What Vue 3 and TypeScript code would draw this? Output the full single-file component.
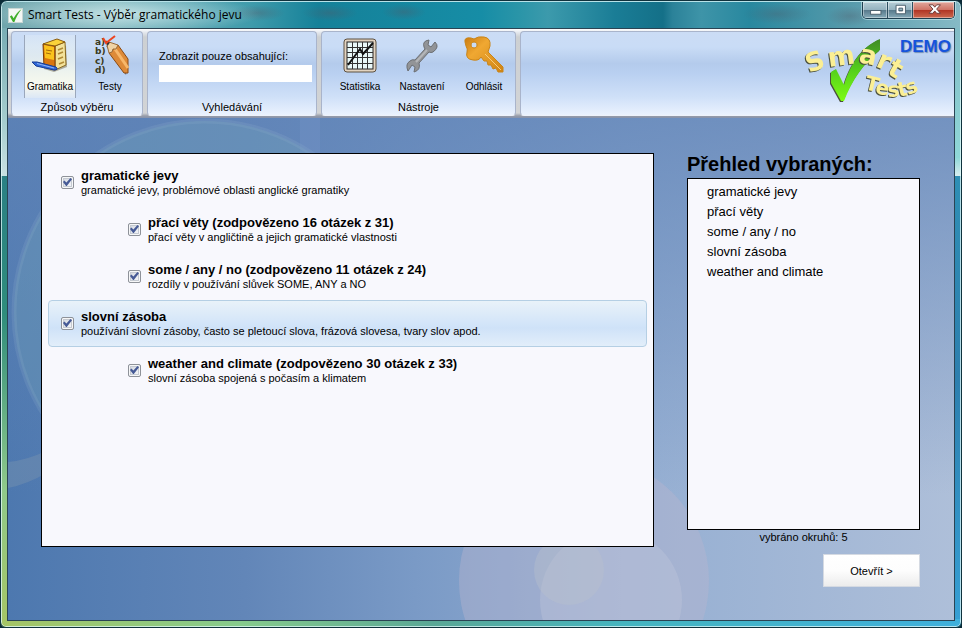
<script setup lang="ts">
import { computed, ref } from 'vue'

interface Topic {
  id: string
  title: string
  progress?: string
  note: string
  child: boolean
  checked: boolean
}

const topics = ref<Topic[]>([
  { id: 'jevy', title: 'gramatické jevy', note: 'gramatické jevy, problémové oblasti anglické gramatiky', child: false, checked: true },
  { id: 'prani', title: 'přací věty', progress: '(zodpovězeno 16 otázek z 31)', note: 'přací věty v angličtině a jejich gramatické vlastnosti', child: true, checked: true },
  { id: 'some', title: 'some / any / no', progress: '(zodpovězeno 11 otázek z 24)', note: 'rozdíly v používání slůvek SOME, ANY a NO', child: true, checked: true },
  { id: 'zasoba', title: 'slovní zásoba', note: 'používání slovní zásoby, často se pletoucí slova, frázová slovesa, tvary slov apod.', child: false, checked: true },
  { id: 'weather', title: 'weather and climate', progress: '(zodpovězeno 30 otázek z 33)', note: 'slovní zásoba spojená s počasím a klimatem', child: true, checked: true },
])

const activeId = ref('zasoba')
const filter = ref('')
const mode = ref<'gramatika' | 'testy'>('gramatika')
const selected = computed(() => topics.value.filter((t) => t.checked))
</script>

<template>
  <div class="window">
    <header class="titlebar">
      <svg class="app-icon" viewBox="0 0 16 16" aria-hidden="true">
        <rect x="0.5" y="0.5" width="15" height="15" fill="#f4f7f4" stroke="#c9d6d4" />
        <path d="M2 9 L4 7.6 L6 11 C8 7 10.5 3.5 14.5 1 C11 5.5 8.5 10 6.8 15 L5.3 15 Z" fill="#3fae2a" />
      </svg>
      <h1>Smart Tests - Výběr gramatického jevu</h1>
      <div class="caption-buttons">
        <button type="button" aria-label="Minimalizovat">
          <svg viewBox="0 0 24 17"><rect x="7" y="9" width="11" height="4" fill="#fff" stroke="#4b5f6c" /></svg>
        </button>
        <button type="button" aria-label="Maximalizovat">
          <svg viewBox="0 0 24 17"><path d="M7.500 3.500h10v9h-10z M10.500 6.500v3h4v-3z" fill="#fff" fill-rule="evenodd" stroke="#4b5f6c" /></svg>
        </button>
        <button type="button" class="close" aria-label="Zavřít">
          <svg viewBox="0 0 40 17"><path d="M15 3h4l2 2.500L23 3h4l-4 4.500 4 4.500h-4l-2-2.500-2 2.500h-4l4-4.500z" fill="#fff" stroke="#6b3a38" /></svg>
        </button>
      </div>
    </header>

    <div class="client">
      <nav class="ribbon">
        <section class="group group-mode">
          <div class="tools">
            <button type="button" class="tool" :class="{ on: mode === 'gramatika' }" @click="mode = 'gramatika'">
              <svg viewBox="0 0 36 36" aria-hidden="true">
                <path d="M12 8 L28 4 L34 8 L35 29 L22 34 L12 31 Z" fill="#3a2a0a" opacity=".35" />
                <path d="M23 8 L33 4 L34 27 L23 32 Z" fill="#f3e29a" stroke="#8a6a20" />
                <path d="M26 12l5-2M26 16l5-2M26 21l5-2M27 26l5-2" stroke="#b08a35" stroke-width="1.500" />
                <path d="M11 6 L23 8 L23 32 L12 29 Z" fill="#d9760f" stroke="#7a3d05" />
                <path d="M12 7 L22 9 L22 22 L13 20 Z" fill="#fbc31c" />
                <path d="M14 12l6 1M14 15l5 1" stroke="#a5680a" />
                <path d="M11 6 L25 1 L33 4 L23 8 Z" fill="#fbd23a" stroke="#8a5a10" />
                <path d="M0 24 L5 24 L24 29 Q27 32 22 32 L4 28 Z" fill="#2f68d8" stroke="#173c94" />
                <path d="M5 25.500 L22 30" stroke="#8fb4f6" />
              </svg>
              <span>Gramatika</span>
            </button>
            <button type="button" class="tool" :class="{ on: mode === 'testy' }" @click="mode = 'testy'">
              <svg viewBox="0 0 36 40" class="tall" aria-hidden="true">
                <g class="abc">
                  <text x="3" y="10">a)</text>
                  <text x="3" y="19">b)</text>
                  <text x="3" y="29">c)</text>
                  <text x="3" y="38">d)</text>
                </g>
                <path d="M14 11 L34 40 L35 35 L26 14 Z" fill="#222" opacity=".55" />
                <path d="M17 18 L26 10 L36 24 L36 38 L32 38 Z" fill="#dd8a38" stroke="#8a4a14" />
                <path d="M23 14 L36 33" stroke="#f7b76a" stroke-width="3" />
                <path d="M14 6 L26 10 L24 14 L21 14 L20 17 L17 18 Z" fill="#f0d3a6" stroke="#9b6c3a" />
                <path d="M14 6 L18 7.500 L15.500 11 Z" fill="#333" />
                <path d="M11 3 L14 8 L23 1" fill="none" stroke="#ee4420" stroke-width="2" />
              </svg>
              <span>Testy</span>
            </button>
          </div>
          <h2>Způsob výběru</h2>
        </section>

        <section class="group group-search">
          <div class="search">
            <label for="filter">Zobrazit pouze obsahující:</label>
            <input id="filter" v-model="filter" type="text" />
          </div>
          <h2>Vyhledávání</h2>
        </section>

        <section class="group group-tools">
          <div class="tools">
            <button type="button" class="tool">
              <svg viewBox="0 0 36 36" aria-hidden="true">
                <rect x="2" y="1" width="32" height="33" rx="3" fill="#e2d3c0" stroke="#5d5040" />
                <rect x="5" y="4" width="26" height="27" fill="#e9f8f8" stroke="#222" />
                <path d="M10.500 4v27M15.500 4v27M20.500 4v27M25.500 4v27M5 9.500h26M5 14.500h26M5 19.500h26M5 25.500h26" stroke="#333" />
                <path d="M6 27 L18 11 L21 16 L31 5" fill="none" stroke="#111" stroke-width="2" />
              </svg>
              <span>Statistika</span>
            </button>
            <button type="button" class="tool">
              <svg viewBox="0 0 36 36" aria-hidden="true">
                <path d="M20 9 Q18 3 25 2 L24 7 L27 9 L31 4 Q36 9 29 14 Q27 15 25 14 L15 25 Q17 32 10 34 L11 29 L8 27 L4 33 Q1 26 6 23 Q8 21 11 22 L21 11 Z" fill="#929497" stroke="#6c6f73" stroke-linejoin="round" />
                <path d="M23 12 L12 24" stroke="#b4b6b9" stroke-width="2" />
              </svg>
              <span>Nastavení</span>
            </button>
            <button type="button" class="tool">
              <svg viewBox="0 0 40 38" class="key" aria-hidden="true">
                <defs>
                  <linearGradient id="gold" x1="0" y1="0" x2="1" y2="1">
                    <stop offset="0" stop-color="#c97a10" />
                    <stop offset=".35" stop-color="#f0a832" />
                    <stop offset="1" stop-color="#cf8312" />
                  </linearGradient>
                </defs>
                <path fill-rule="evenodd" d="M1 6 Q0 1 7 2 L10 3 Q14 0 20 1 Q27 2 26 10 L24 16 L39 31 L39 36 L34 36 L32 32 L29 33 L27 29 L24 29 L23 25 L20 25 L17 21 Q15 25 9 24 Q1 23 3 16 Q4 13 2 10 Z M10 6a3 3 0 1 0 .1 0z" fill="url(#gold)" stroke="#c98418" />
                <path d="M21 18 L37 34" stroke="#f8cc78" />
              </svg>
              <span>Odhlásit</span>
            </button>
          </div>
          <h2>Nástroje</h2>
        </section>

        <section class="group group-brand">
          <svg class="logo" viewBox="0 0 124 70">
            <defs>
              <linearGradient id="tick" x1="0" y1="1" x2="0" y2="0">
                <stop offset="0" stop-color="#7dfc14" />
                <stop offset=".5" stop-color="#55cf1c" />
                <stop offset="1" stop-color="#3f8a25" />
              </linearGradient>
            </defs>
            <path class="lifted" d="M27 40 L32 37 L40 53 C46 33 57 15 76 7 L76 18 C60 31 48 48 40 69 L37 69 L27 51 Z" fill="url(#tick)" />
            <text class="big lifted" x="5 25 54 71 82" y="41 35 30 34 41" rotate="-20 -8 12 24 30">Smart</text>
            <text class="small lifted" x="60 71 84 95 104" y="57 62 65 65 63" rotate="14 6 -4 -12 -20">Tests</text>
          </svg>
          <strong class="demo">DEMO</strong>
        </section>
      </nav>

      <main class="stage">
        <svg class="bubbles" viewBox="0 0 946 502" preserveAspectRatio="xMidYMax slice" aria-hidden="true">
          <circle cx="197" cy="194" r="191" fill="#74a4b8" fill-opacity=".32" stroke="#8fb0cc" stroke-opacity=".2" stroke-width="5" />
          <path d="M0 344 Q20 342 40 332 L40 354 Q20 366 0 370 Z" fill="#7d95b0" opacity=".4" />
          <rect x="292" y="0" width="20" height="60" fill="#8fa8e0" opacity=".15" />
          <circle cx="576" cy="463" r="125" fill="#b8b6d0" fill-opacity=".42" />
          <circle cx="603" cy="482" r="71" fill="#c2c8dc" fill-opacity=".35" />
          <circle cx="561" cy="452" r="35" fill="#b9c0cc" fill-opacity=".4" />
        </svg>

        <section class="topics" aria-label="Okruhy">
          <ul>
            <li v-for="t in topics" :key="t.id" :class="{ child: t.child, active: t.id === activeId }" @click="activeId = t.id">
              <input :id="t.id" v-model="t.checked" type="checkbox" />
              <label :for="t.id">
                <b>{{ t.title }}{{ t.progress ? ' ' + t.progress : '' }}</b>
                <span>{{ t.note }}</span>
              </label>
            </li>
          </ul>
        </section>

        <aside class="summary">
          <h2>Přehled vybraných:</h2>
          <ul>
            <li v-for="t in selected" :key="t.id">{{ t.title }}</li>
          </ul>
          <p>vybráno okruhů: {{ selected.length }}</p>
          <button type="button" class="open">Otevřít &gt;</button>
        </aside>
      </main>
    </div>
  </div>
</template>

<style>
body {
  background: #0b2a36;
}
</style>

<style scoped>
* {
  box-sizing: border-box;
}
h1, h2, p, ul {
  margin: 0;
  padding: 0;
  font-weight: normal;
}
ul {
  list-style: none;
}
button {
  font: inherit;
  color: inherit;
  margin: 0;
  padding: 0;
}
.window {
  min-height: 100vh;
  display: flex;
  flex-direction: column;
  padding: 0 6px 6px;
  border: 1px solid #10323d;
  border-radius: 7px 7px 6px 6px;
  box-shadow: inset 0 0 0 1px rgba(225, 250, 250, 0.75);
  font-family: "Liberation Sans", Arial, sans-serif;
  color: #000;
  background:
    linear-gradient(90deg, #a5c565, #86cb8c 25%, #5aa896 45%, #45b5c0 65%, #3fb0dc) bottom / 100% 8px no-repeat,
    linear-gradient(180deg, #7fb5c2, #8fd8d8 25%, #d9eef0 28%, #2f8fb5 28%, #2d7fae 60%, #36a0d5) right / 8px 100% no-repeat,
    linear-gradient(180deg, #6ba3ac, #a8cfd0 20%, #c8e0e2 28%, #2a8084 28%, #2f8d7c 50%, #8fc98a 78%, #a5c565) left / 8px 100% no-repeat,
    #3b9db3;
}
.titlebar {
  height: 26px;
  display: flex;
  align-items: center;
  gap: 5px;
  margin: 1px -5px 0;
  padding: 0 5px 0 6px;
  border-radius: 5px 5px 0 0;
  background:
    radial-gradient(ellipse 140px 20px at 120px 12px, rgba(235, 250, 250, 0.65), rgba(235, 250, 250, 0) 100%),
    radial-gradient(ellipse 28px 8px at 255px 11px, rgba(80, 90, 105, 0.4), transparent),
    radial-gradient(ellipse 28px 8px at 328px 11px, rgba(80, 90, 105, 0.4), transparent),
    radial-gradient(ellipse 22px 8px at 402px 10px, rgba(80, 90, 105, 0.4), transparent),
    radial-gradient(ellipse 34px 10px at 775px 12px, rgba(80, 90, 105, 0.35), transparent),
    radial-gradient(ellipse 24px 10px at 848px 14px, rgba(80, 90, 105, 0.35), transparent),
    linear-gradient(90deg, #6fa5ac, #7ab4bc 12%, #3f9bab 26%, #158199 33%, #168da6 50%, #2a95a8 54%, #3c9aac 57%, #1a7d96 64%, #147088 69%, #2b8299 70%, #3e94a8 73%, #28889f 78%, #5599aa 88%, #86bac6);
}
.app-icon {
  width: 15px;
  height: 15px;
}
h1 {
  flex: 1;
  font: 12px/16px "Open Sans", "Noto Sans", sans-serif;
  white-space: nowrap;
}
.caption-buttons {
  align-self: flex-start;
  display: flex;
  height: 17px;
  border: 1px solid #1e3f50;
  border-top: 0;
  border-radius: 0 0 5px 5px;
  overflow: hidden;
  box-shadow: 0 0 0 1px rgba(220, 245, 250, 0.5);
}
.caption-buttons button {
  width: 25px;
  border: 0;
  border-right: 1px solid #2c4f60;
  background: linear-gradient(#b5cdd6, #94b2bf 48%, #56788a 50%, #86aab8);
  box-shadow: inset 0 0 0 1px rgba(255, 255, 255, 0.4);
}
.caption-buttons .close {
  width: 41px;
  border-right: 0;
  background: linear-gradient(#e0a79c, #cf7466 48%, #b03323 50%, #cc6a50);
}
.caption-buttons svg {
  display: block;
  height: 16px;
  margin: 0 auto;
}
.client {
  flex: 1;
  display: flex;
  flex-direction: column;
  border: 1px solid #2a4454;
}
.ribbon {
  display: flex;
  gap: 4px;
  padding: 2px 0 0 3px;
  height: 89px;
  background: linear-gradient(#fff, #e6eaf0 3px, #cdd0d2 8px, #d2d4d6 84px, #979ca8 87px, #8692ac);
}
.group {
  display: flex;
  flex-direction: column;
  height: 85px;
  border: 1px solid #a9b4cb;
  border-bottom-color: #eef2fa;
  border-radius: 4px;
  background: linear-gradient(#cbdcf5, #c9dcf6 18%, #b4cbec 38%, #b9d0f1 50%, #cfe0f8 78%, #eaf2fe);
}
.group h2 {
  margin-top: auto;
  padding-bottom: 1px;
  font-size: 11px;
  line-height: 14px;
  text-align: center;
}
.group-mode {
  width: 132px;
}
.group-search {
  width: 170px;
}
.group-tools {
  width: 195px;
}
.group-brand {
  flex: 1;
  flex-direction: row;
  justify-content: flex-end;
  border-right: 0;
  border-radius: 4px 0 0 4px;
}
.tools {
  display: flex;
  gap: 8px;
  padding: 3px 0 0 12px;
}
.group-tools .tools {
  gap: 10px;
}
.tool {
  width: 52px;
  height: 63px;
  display: flex;
  flex-direction: column;
  align-items: center;
  justify-content: space-between;
  padding: 0 0 5px;
  border: 1px solid transparent;
  border-width: 0 1px;
  background: none;
  font-size: 10px;
  line-height: 12px;
}
.tool.on {
  border-color: #9aa7bb;
  background: linear-gradient(rgba(235, 243, 248, 0.3), #eef4ee 60%, #f8f9ee 80%, #dbe7f6);
}
.tool svg {
  width: 36px;
  height: 36px;
  margin-top: 3px;
  overflow: visible;
}
.tool svg.tall {
  height: 40px;
  margin-top: 0;
}
.tool svg.key {
  width: 40px;
  height: 38px;
  margin-top: 1px;
}
.abc text {
  font: bold 9px "DejaVu Sans", sans-serif;
  fill: #3a3a1c;
}
.search {
  padding: 17px 4px 0 11px;
  display: flex;
  flex-direction: column;
  gap: 2px;
}
.search label {
  font-size: 11px;
  line-height: 14px;
}
.search input {
  width: 100%;
  height: 17px;
  border: 0;
  padding: 0 3px;
  background: #fff;
  font: 11px "Liberation Sans", Arial, sans-serif;
}
.logo {
  width: 124px;
  height: 70px;
  flex: none;
  overflow: visible;
}
.logo text {
  font-family: "DejaVu Sans", sans-serif;
  font-weight: bold;
  fill: #fbef94;
}
.logo .big {
  font-size: 26px;
}
.logo .small {
  font-size: 20px;
}
.lifted {
  filter: drop-shadow(-1px 1px 0 #4a4f3c);
}
.demo {
  margin: 5px 3px 0 -28px;
  font-size: 17px;
  line-height: 20px;
  color: #1553dc;
  text-shadow: 1px 1px 1px rgba(60, 90, 140, 0.6);
}
.stage {
  position: relative;
  flex: 1;
  display: grid;
  grid-template-columns: minmax(0, 1fr) 233px;
  gap: 33px;
  padding: 35px 34px 33px 33px;
  background:
    linear-gradient(180deg, rgba(96, 132, 184, 0.75), rgba(96, 132, 184, 0) 75%),
    linear-gradient(90deg, #4d78af, #6286b8 25%, #7a9ac6 43%, #94aed2 65%, #aebfd9);
}
.bubbles {
  position: absolute;
  inset: 0;
  width: 100%;
  height: 100%;
}
.topics {
  position: relative;
  margin-bottom: 40px;
  padding: 5px 6px;
  border: 1px solid #000;
  background: #f8f8fd;
}
.topics li {
  height: 47px;
  display: flex;
  align-items: center;
  gap: 7px;
  padding-left: 12px;
  border: 1px solid transparent;
  border-radius: 4px;
}
.topics li.child {
  padding-left: 79px;
}
.topics li.active {
  border-color: #b5cfe4;
  background: linear-gradient(#e9f2f9, #d3e5f9 50%, #cfe2f8 60%, #e2eefa);
}
.topics input {
  appearance: none;
  width: 13px;
  height: 13px;
  flex: none;
  margin: 0;
  border: 1px solid #8e9299;
  border-radius: 2px;
  background: linear-gradient(135deg, #cfd4dc, #fafbfd);
  box-shadow: inset 0 0 0 1px #f6f7f8, inset 0 0 0 2px #c5cad2;
}
.topics input:checked::before {
  content: "";
  display: block;
  width: 9px;
  height: 9px;
  margin: 1px;
  background: #465a96;
  clip-path: polygon(0 45%, 15% 28%, 38% 50%, 82% 0, 100% 15%, 42% 88%, 34% 88%);
}
.topics label {
  display: flex;
  flex-direction: column;
}
.topics b {
  font-size: 13px;
  line-height: 15px;
}
.topics span {
  font-size: 11px;
  line-height: 14px;
}
.summary {
  position: relative;
  display: flex;
  flex-direction: column;
}
.summary h2 {
  font-size: 20px;
  font-weight: bold;
  line-height: 23px;
  padding-bottom: 2px;
}
.summary ul {
  flex: 1;
  padding: 3px 19px;
  border: 1px solid #000;
  background: #f8f8fd;
}
.summary li {
  font-size: 13px;
  line-height: 20px;
}
.summary p {
  font-size: 11px;
  line-height: 15px;
  text-align: center;
}
.summary .open {
  align-self: flex-end;
  width: 97px;
  height: 33px;
  margin-top: 9px;
  border: 1px solid #d5dae2;
  background: linear-gradient(#fff, #fdfdfd 50%, #ececec);
  font-size: 11px;
}
</style>
